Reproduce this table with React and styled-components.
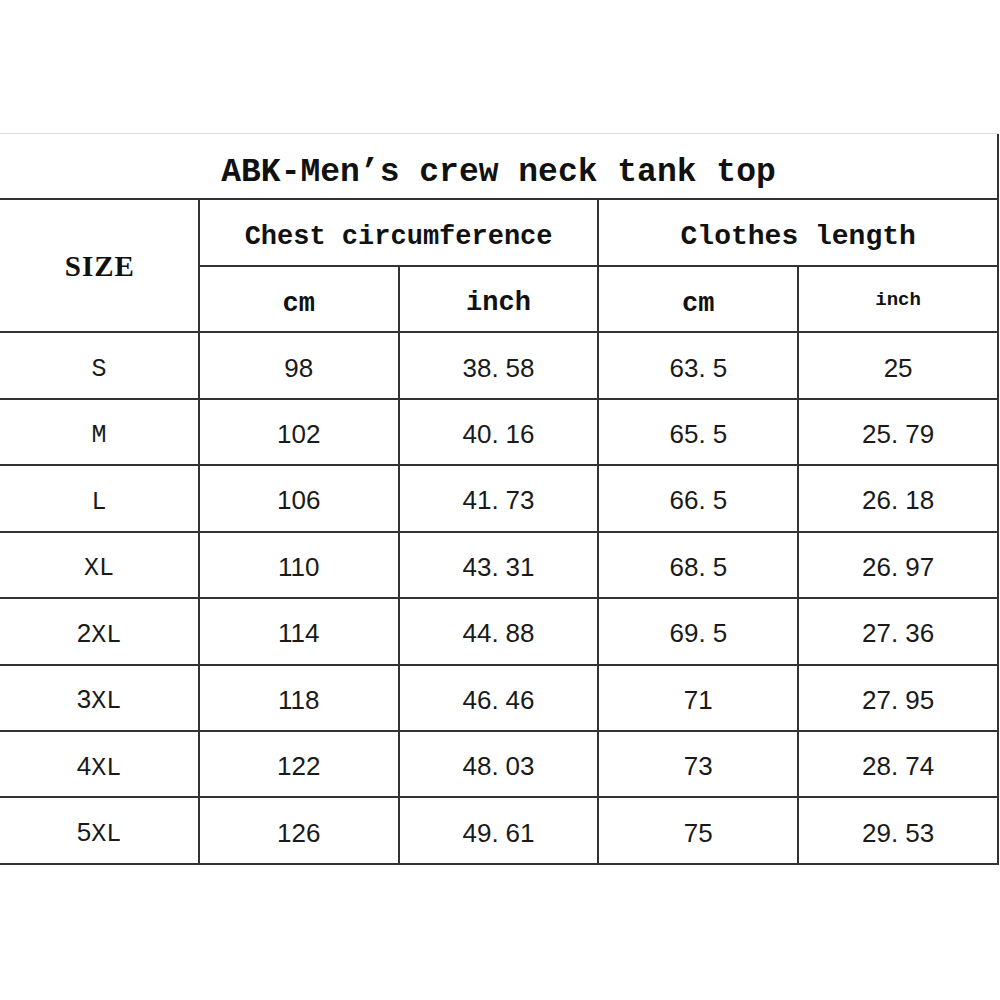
import React from "react";
import styled, { createGlobalStyle } from "styled-components";

const Global = createGlobalStyle`
  html, body { margin: 0; padding: 0; background: #fff; }
  body { width: 1000px; height: 1000px; overflow: hidden; }
`;

const Page = styled.div`
  padding-top: 133px;
  width: 1000px;
`;

const Grid = styled.div`
  display: grid;
  width: 999px;
  grid-template-columns: repeat(5, 1fr);
  grid-template-rows: repeat(11, 66.45px);
  border-top: 1px solid #dcdcdc;
  box-sizing: border-box;
  color: #111;
`;

const Cell = styled.div`
  display: flex;
  align-items: center;
  justify-content: center;
  box-sizing: border-box;
  border-right: 2px solid #333;
  border-bottom: 2px solid #333;
  grid-column: ${(p) => p.$col || "auto"};
  grid-row: ${(p) => p.$row || "auto"};
  font-family: "Liberation Mono", "DejaVu Sans Mono", monospace;
  font-size: ${(p) => p.$size || 24}px;
  font-weight: ${(p) => (p.$bold ? 700 : 400)};
  padding-top: ${(p) => p.$pt || 4}px;
  white-space: pre;
`;

const Title = styled(Cell)`
  grid-column: 1 / span 5;
  font-size: 33px;
  font-weight: 700;
  padding-top: 12px;
`;

const SizeHead = styled(Cell)`
  grid-column: 1;
  grid-row: 2 / span 2;
  font-family: "Liberation Serif", serif;
  font-size: 29px;
  font-weight: 700;
  letter-spacing: 1px;
  padding-left: 2px;
  padding-bottom: 2px;
`;

const DataCell = styled(Cell)`
  font-family: "Liberation Sans", sans-serif;
  font-size: 26px;
  padding-top: 5px;
  color: #1a1a1a;
`;

const Letters = styled.span`
  font-family: "Liberation Mono", monospace;
  font-size: 25px;
`;

const Dot = styled.span`
  margin-right: 7px;
`;

const rows = [
  ["S", "98", "38.58", "63.5", "25"],
  ["M", "102", "40.16", "65.5", "25.79"],
  ["L", "106", "41.73", "66.5", "26.18"],
  ["XL", "110", "43.31", "68.5", "26.97"],
  ["2XL", "114", "44.88", "69.5", "27.36"],
  ["3XL", "118", "46.46", "71", "27.95"],
  ["4XL", "122", "48.03", "73", "28.74"],
  ["5XL", "126", "49.61", "75", "29.53"],
];

function SizeLabel({ v }) {
  const m = v.match(/^(\d*)(\D+)$/);
  return (
    <span>
      {m[1]}
      <Letters>{m[2]}</Letters>
    </span>
  );
}

function Value({ v }) {
  if (!v.includes(".")) return <span>{v}</span>;
  const [a, b] = v.split(".");
  return (
    <span>
      {a}
      <Dot>.</Dot>
      {b}
    </span>
  );
}

export default function App() {
  return (
    <Page>
      <Global />
      <Grid>
        <Title>ABK-Men’s crew neck tank top</Title>
        <SizeHead>SIZE</SizeHead>
        <Cell $col="2 / span 2" $bold $size={27} $pt={8}>Chest circumference</Cell>
        <Cell $col="4 / span 2" $bold $size={28} $pt={8}>Clothes length</Cell>
        <Cell $bold $size={27} $pt={10}>cm</Cell>
        <Cell $bold $size={27} $pt={8}>inch</Cell>
        <Cell $bold $size={27} $pt={10}>cm</Cell>
        <Cell $bold $size={19} $pt={1}>inch</Cell>
        {rows.map((r) =>
          r.map((v, i) => (
            <DataCell key={r[0] + i}>
              {i === 0 ? <SizeLabel v={v} /> : <Value v={v} />}
            </DataCell>
          ))
        )}
      </Grid>
    </Page>
  );
}
